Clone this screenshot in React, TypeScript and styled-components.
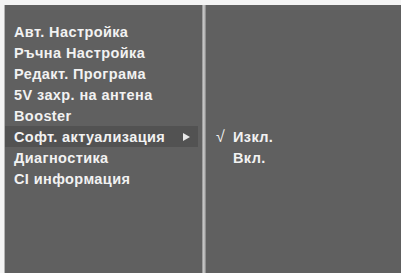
import styled, { createGlobalStyle } from 'styled-components';

const GlobalStyle = createGlobalStyle`
  html, body {
    margin: 0;
    padding: 0;
    background: #ffffff;
  }
`;

const Screen = styled.div`
  width: 401px;
  height: 273px;
  box-sizing: border-box;
  padding: 5px 0 0 4px;
  background: #f4f4f4;
  overflow: hidden;
`;

const Panel = styled.div`
  height: 100%;
  display: grid;
  grid-template-columns: 197px 4px 1fr;
  background: #606060;
  border-left: 1px solid #b4b4b4;
  font-family: "Liberation Sans", Arial, Helvetica, sans-serif;
  color: #f2f2f2;
`;

const Divider = styled.div`
  background: linear-gradient(to right, #8a8a8a, #c8c8c8 40%, #b0b0b0 70%, #7a7a7a);
`;

const List = styled.ul<{ $offset: number }>`
  list-style: none;
  margin: 0;
  padding: ${({ $offset }) => $offset}px 4px 0 0;
  display: flex;
  flex-direction: column;
`;

const Item = styled.li<{ $active?: boolean }>`
  height: 21px;
  display: flex;
  align-items: center;
  padding-left: 9px;
  padding-right: 8px;
  font-size: 14.5px;
  letter-spacing: 0.4px;
  font-weight: bold;
  white-space: nowrap;
  background: ${({ $active }) => ($active ? '#525252' : 'transparent')};
`;

const Label = styled.span`
  flex: 1;
`;

const Arrow = styled.span`
  width: 0;
  height: 0;
  border-top: 4px solid transparent;
  border-bottom: 4px solid transparent;
  border-left: 7px solid #e8e8e8;
`;

const OptionList = styled.ul`
  list-style: none;
  margin: 0;
  padding: 121px 0 0 10px;
  display: flex;
  flex-direction: column;
`;

const Option = styled.li`
  height: 21px;
  display: flex;
  align-items: center;
  font-size: 14.5px;
  letter-spacing: 0.4px;
  font-weight: bold;
  white-space: nowrap;
`;

const Check = styled.span<{ $on: boolean }>`
  width: 17px;
  font-weight: normal;
  font-size: 16px;
  visibility: ${({ $on }) => ($on ? 'visible' : 'hidden')};
`;

const menu = [
  'Авт. Настройка',
  'Ръчна Настройка',
  'Редакт. Програма',
  '5V захр. на антена',
  'Booster',
  'Софт. актуализация',
  'Диагностика',
  'CI информация',
];

const options = [
  { label: 'Изкл.', selected: true },
  { label: 'Вкл.', selected: false },
];

export default function App() {
  const active = 5;

  return (
    <>
      <GlobalStyle />
      <Screen>
        <Panel>
          <List $offset={16}>
            {menu.map((label, i) => (
              <Item key={label} $active={i === active}>
                <Label>{label}</Label>
                {i === active && <Arrow />}
              </Item>
            ))}
          </List>
          <Divider />
          <OptionList>
            {options.map((opt) => (
              <Option key={opt.label}>
                <Check $on={opt.selected}>√</Check>
                {opt.label}
              </Option>
            ))}
          </OptionList>
        </Panel>
      </Screen>
    </>
  );
}
